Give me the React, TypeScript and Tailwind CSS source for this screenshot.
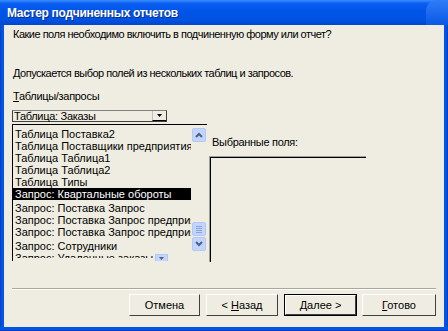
import React from 'react'

const font = { fontFamily: '"Liberation Sans", Arial, sans-serif' }

const rows = [
  { text: 'Таблица Поставка2', h: 'h-[12px]' },
  { text: 'Таблица Поставщики предприятия', h: 'h-[12px]' },
  { text: 'Таблица Таблица1', h: 'h-[12px]' },
  { text: 'Таблица Таблица2', h: 'h-[12px]' },
  { text: 'Таблица Типы', h: 'h-[12px]' },
  { text: 'Запрос: Квартальные обороты', h: 'h-[12px]', selected: true },
  { text: 'Запрос: Поставка Запрос', h: 'h-[14px] pt-[2px]' },
  { text: 'Запрос: Поставка Запрос предприятия', h: 'h-[12px]' },
  { text: 'Запрос: Поставка Запрос предприятия', h: 'h-[12px]' },
  { text: 'Запрос: Сотрудники', h: 'h-[14px] pt-[2px]' },
  { text: 'Запрос: Удаленные заказы', h: 'h-[12px]' },
]

function ScrollButton({ dir }: { dir: 'up' | 'down' }) {
  return (
    <div className="w-[14px] h-[14px] rounded-[2px] border border-[#b4c8f6] bg-[#c3d5fd] flex items-center justify-center">
      <svg width="8" height="6" viewBox="0 0 8 6">
        <path
          d={dir === 'up' ? 'M1 5 L4 2 L7 5' : 'M1 1 L4 4 L7 1'}
          stroke="#4d6185"
          strokeWidth="2"
          fill="none"
        />
      </svg>
    </div>
  )
}

function Btn({ label, u, rest, pre, def, w }: { label?: string; u?: string; rest?: string; pre?: string; def?: boolean; w: string }) {
  return (
    <div className={`${w} h-[22px] ${def ? 'border border-black' : ''}`}>
      <div className="w-full h-full border-t border-l border-white border-r border-b border-r-[#404040] border-b-[#404040] flex items-center justify-center text-[11px] text-black bg-[#efede2]">
        {label ? label : (
          <span>
            {pre}
            <span className="underline">{u}</span>
            {rest}
          </span>
        )}
      </div>
    </div>
  )
}

export default function App() {
  return (
    <div className="w-[448px] h-[331px] flex flex-col bg-[#0055e5] overflow-hidden" style={font}>
      {/* title bar */}
      <div className="h-[25px] shrink-0 relative bg-[linear-gradient(to_bottom,#3b8cff_0%,#0a5ff2_14%,#0055e8_45%,#0052e0_80%,#0046cf_100%)] flex items-center pl-[7px]">
        <span className="text-white font-bold text-[12px] tracking-[-0.3px] [text-shadow:1px_1px_0_#0a2c8a]">
          Мастер подчиненных отчетов
        </span>
        <div className="absolute right-0 top-0 w-[22px] h-[25px] rounded-tl-[10px] bg-[linear-gradient(to_bottom,#2f7cf8,#0a58e4)]" />
      </div>

      <div className="flex-1 flex">
        <div className="w-[4px] bg-[#0055e5] border-l border-[#0a3fc4]" />
        <div className="flex-1 bg-[#efede2] flex flex-col text-[11px] text-black">
          <div className="pl-[9px] pt-[3px] leading-[13px] tracking-[-0.5px]">Какие поля необходимо включить в подчиненную форму или отчет?</div>
          <div className="pl-[9px] mt-[26px] leading-[13px] tracking-[-0.5px]">Допускается выбор полей из нескольких таблиц и запросов.</div>
          <div className="pl-[9px] mt-[10px] leading-[13px] tracking-[-0.3px]">
            <span className="underline">Т</span>аблицы/запросы
          </div>

          {/* combo */}
          <div className="ml-[8px] mt-[7px] w-[155px] h-[12px] border border-[#404040] border-t-[#808080] flex">
            <div className="flex-1 pl-[1px] leading-[10px] text-[11px] tracking-[-0.3px]">Таблица: Заказы</div>
            <div className="w-[14px] border-l border-[#c0c0c0] border-b border-b-black flex items-center justify-center">
              <svg width="5" height="3" viewBox="0 0 5 3">
                <path d="M0 0 H5 L2.5 3 Z" fill="#000" />
              </svg>
            </div>
          </div>

          <div className="flex mt-[2px] ml-[8px]">
            {/* list */}
            <div className="relative w-[195px] h-[137px] border-t border-l border-black flex">
              <div className="w-[178px] h-[133px] overflow-hidden pt-[3px] text-[11px]">
                {rows.map((r, i) => (
                  <div
                    key={i}
                    className={`${r.h} leading-[12px] pl-[2px] whitespace-nowrap ${r.selected ? 'bg-black text-white' : ''}`}
                  >
                    {r.text}
                  </div>
                ))}
              </div>
              <div className="w-[16px] flex flex-col items-center">
                <div className="mt-[3px]"><ScrollButton dir="up" /></div>
                <div className="mt-[80px] w-[14px] h-[14px] rounded-[2px] border border-[#b4c8f6] bg-[#c3d5fd] flex flex-col items-center justify-center gap-[1px]">
                  <div className="w-[6px] h-[1px] bg-[#8aa3db]" />
                  <div className="w-[6px] h-[1px] bg-[#8aa3db]" />
                  <div className="w-[6px] h-[1px] bg-[#8aa3db]" />
                  <div className="w-[6px] h-[1px] bg-[#8aa3db]" />
                </div>
                <div className="mt-[1px]"><ScrollButton dir="down" /></div>
              </div>
              <div className="absolute left-[142px] top-[129px] w-[13px] h-[7px] bg-[#c3d5fd] border border-[#b4c8f6] border-b-0 flex items-center justify-center">
                <svg width="5" height="3" viewBox="0 0 5 3">
                  <path d="M0 0 H5 L2.5 3 Z" fill="#4d6185" />
                </svg>
              </div>
            </div>

            {/* selected fields */}
            <div className="ml-[2px] flex flex-col">
              <div className="pl-[3px] mt-[12px] leading-[13px] tracking-[-0.3px]">Выбранные поля:</div>
              <div className="mt-[7px] w-[157px] h-[106px] border-t border-l border-[#a0a0a0]">
                <div className="w-full h-full border-t border-l border-black" />
              </div>
            </div>
          </div>

          <div className="mx-[8px] mt-[26px] border-t border-[#aca899] border-b border-b-white" />

          <div className="flex justify-end mt-[4px] pr-[8px]">
            <Btn w="w-[71px]" label="Отмена" />
            <div className="ml-[6px]"><Btn w="w-[72px]" pre="< " u="Н" rest="азад" /></div>
            <div className="ml-[6px]"><Btn w="w-[73px]" def u="Д" rest="алее >" /></div>
            <div className="ml-[5px]"><Btn w="w-[74px]" u="Г" rest="отово" /></div>
          </div>
        </div>
        <div className="w-[4px] bg-[#0055e5] border-r border-[#0a3fc4]" />
      </div>
      <div className="h-[4px] shrink-0 bg-[#0055e5] border-b border-[#0a3fc4]" />
    </div>
  )
}
